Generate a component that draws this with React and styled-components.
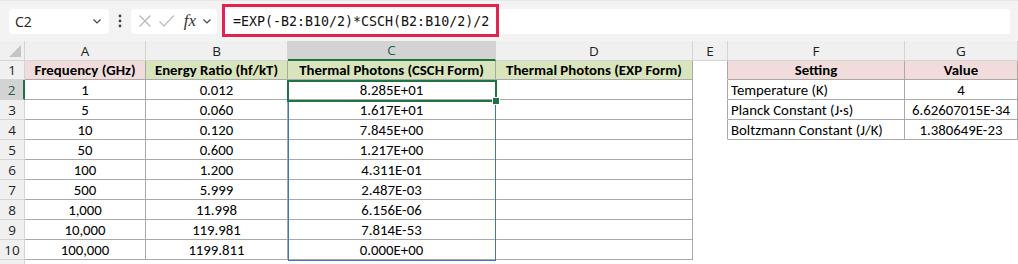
import React from "react";
import styled, { createGlobalStyle } from "styled-components";

const GlobalStyle = createGlobalStyle`
  html, body { margin: 0; padding: 0; background: #ffffff; }
  body { font-family: Calibri, Carlito, Lato, "Liberation Sans", sans-serif; color: #000; }
  * { box-sizing: border-box; }
`;

const COLS = "25px 121px 142px 208px 197px 35px 177px 113px";
const GRID = "#a9a9a9";
const HEADLINE = "#d4d4d4";
const GREEN = "#217346";

const Page = styled.div`
  width: 1018px;
  height: 264px;
  overflow: hidden;
  background: #fff;
`;

const Toolbar = styled.div`
  height: 41px;
  background: #f3f3f3;
  display: flex;
  align-items: center;
  padding: 0 8px 0 9px;
  border-top: 1px solid #e6e6e6;
  font-family: "Open Sans", "Noto Sans", sans-serif;
`;

const NameBox = styled.div`
  width: 100px;
  height: 25px;
  background: #fff;
  border-radius: 4px;
  display: flex;
  align-items: center;
  justify-content: space-between;
  padding: 0 6px 0 6px;
  font-size: 14px;
  color: #222;
`;

const Dots = styled.div`
  width: 22px;
  display: flex;
  justify-content: center;
`;

const FxBox = styled.div`
  width: 86px;
  height: 25px;
  background: #fff;
  border-radius: 4px;
  display: flex;
  align-items: center;
  padding: 0 4px 0 6px;
  gap: 5px;
`;

const Fx = styled.span`
  font-family: "Liberation Serif", "DejaVu Serif", serif;
  font-style: italic;
  font-size: 17px;
  color: #333;
  margin-left: 3px;
`;

const FormulaBar = styled.div`
  position: relative;
  flex: 1;
  margin-left: 6px;
  height: 25px;
  background: #fff;
  border-radius: 3px;
  display: flex;
  align-items: center;
  padding-left: 10px;
  font-family: "DejaVu Sans Mono", "Liberation Mono", monospace;
  font-size: 13.3px;
  color: #111;
`;

const Highlight = styled.div`
  position: absolute;
  left: -1px;
  top: -5px;
  width: 277px;
  height: 33px;
  border: 3px solid #e2224f;
  pointer-events: none;
`;

const Sheet = styled.div`
  position: relative;
`;

const Row = styled.div`
  display: grid;
  grid-template-columns: ${COLS};
  height: ${(p) => p.$h || 20}px;
`;

const ColHead = styled.div`
  background: ${(p) => (p.$sel ? "#d3d3d3" : "#f0f0f0")};
  border-right: 1px solid ${HEADLINE};
  border-bottom: ${(p) => (p.$sel ? `2px solid ${GREEN}` : `1px solid ${HEADLINE}`)};
  display: flex;
  align-items: center;
  justify-content: center;
  font-family: "Open Sans", "Noto Sans", sans-serif;
  font-size: 13.5px;
  color: ${(p) => (p.$sel ? "#1c6040" : "#222")};
  position: relative;
`;

const Corner = styled.div`
  background: #f0f0f0;
  border-right: 1px solid ${HEADLINE};
  border-bottom: 1px solid ${HEADLINE};
  position: relative;
  &::after {
    content: "";
    position: absolute;
    right: 3px;
    bottom: 3px;
    width: 0;
    height: 0;
    border-left: 12px solid transparent;
    border-bottom: 12px solid #c4c4c4;
  }
`;

const RowHead = styled.div`
  background: ${(p) => (p.$sel ? "#d3d3d3" : "#f0f0f0")};
  border-right: ${(p) => (p.$sel ? `2px solid ${GREEN}` : `1px solid ${HEADLINE}`)};
  border-bottom: 1px solid ${HEADLINE};
  display: flex;
  align-items: center;
  justify-content: center;
  font-family: "Open Sans", "Noto Sans", sans-serif;
  font-size: 13.5px;
  color: ${(p) => (p.$sel ? "#1c6040" : "#222")};
`;

const Cell = styled.div`
  background: ${(p) => p.$bg || "#fff"};
  border-right: ${(p) => (p.$br ? `1px solid ${GRID}` : "1px solid transparent")};
  border-bottom: ${(p) => (p.$bb ? `1px solid ${GRID}` : "1px solid transparent")};
  display: flex;
  align-items: center;
  justify-content: ${(p) => (p.$left ? "flex-start" : "center")};
  padding: ${(p) => (p.$left ? "0 0 0 3px" : "0")};
  font-size: 14.8px;
  font-weight: ${(p) => (p.$bold ? 700 : 400)};
  color: #000;
  white-space: nowrap;
  overflow: hidden;
`;

const Active = styled.div`
  position: absolute;
  left: 287px;
  top: 39px;
  width: 210px;
  height: 22px;
  border: 2px solid ${GREEN};
  pointer-events: none;
  &::after {
    content: "";
    position: absolute;
    right: -5px;
    bottom: -5px;
    width: 6px;
    height: 6px;
    background: ${GREEN};
    border: 1px solid #fff;
  }
`;

const Range = styled.div`
  position: absolute;
  left: 288px;
  top: 60px;
  width: 208px;
  height: 160px;
  border: 1px solid #4472c4;
  border-top: none;
  pointer-events: none;
`;

const PINK = "#f2dcdb";
const OLIVE = "#d8e4bc";

const data = [
  ["1", "0.012", "8.285E+01"],
  ["5", "0.060", "1.617E+01"],
  ["10", "0.120", "7.845E+00"],
  ["50", "0.600", "1.217E+00"],
  ["100", "1.200", "4.311E-01"],
  ["500", "5.999", "2.487E-03"],
  ["1,000", "11.998", "6.156E-06"],
  ["10,000", "119.981", "7.814E-53"],
  ["100,000", "1199.811", "0.000E+00"],
];

const settings = [
  ["Temperature (K)", "4"],
  ["Planck Constant (J·s)", "6.62607015E-34"],
  ["Boltzmann Constant (J/K)", "1.380649E-23"],
];

const Chevron = () => (
  <svg width="12" height="12" viewBox="0 0 12 12">
    <path d="M2.5 4.5 L6 8 L9.5 4.5" fill="none" stroke="#444" strokeWidth="1.2" />
  </svg>
);

const XIcon = () => (
  <svg width="16" height="16" viewBox="0 0 16 16">
    <path d="M2.5 2.5 L13.5 13.5 M13.5 2.5 L2.5 13.5" stroke="#b8b8b8" strokeWidth="1.2" fill="none" />
  </svg>
);

const CheckIcon = () => (
  <svg width="18" height="16" viewBox="0 0 18 16">
    <path d="M1.5 8.5 L6 13 L16 2.5" stroke="#b8b8b8" strokeWidth="1.2" fill="none" />
  </svg>
);

const VDots = () => (
  <svg width="4" height="14" viewBox="0 0 4 14">
    <circle cx="2" cy="2" r="1.4" fill="#444" />
    <circle cx="2" cy="7" r="1.4" fill="#444" />
    <circle cx="2" cy="12" r="1.4" fill="#444" />
  </svg>
);

export default function App() {
  return (
    <Page>
      <GlobalStyle />
      <Toolbar>
        <NameBox>
          <span>C2</span>
          <Chevron />
        </NameBox>
        <Dots>
          <VDots />
        </Dots>
        <FxBox>
          <XIcon />
          <CheckIcon />
          <Fx>fx</Fx>
          <Chevron />
        </FxBox>
        <FormulaBar>
          =EXP(-B2:B10/2)*CSCH(B2:B10/2)/2
          <Highlight />
        </FormulaBar>
      </Toolbar>
      <Sheet>
        <Row $h={19}>
          <Corner />
          {["A", "B", "C", "D", "E", "F", "G"].map((c) => (
            <ColHead key={c} $sel={c === "C"}>
              {c}
            </ColHead>
          ))}
        </Row>
        <Row>
          <RowHead>1</RowHead>
          <Cell $bg={PINK} $bold $br $bb>Frequency (GHz)</Cell>
          <Cell $bg={OLIVE} $bold $br $bb>Energy Ratio (hf/kT)</Cell>
          <Cell $bg={OLIVE} $bold $br $bb>Thermal Photons (CSCH Form)</Cell>
          <Cell $bg={OLIVE} $bold $br $bb>Thermal Photons (EXP Form)</Cell>
          <Cell $br />
          <Cell $bg={PINK} $bold $br $bb>Setting</Cell>
          <Cell $bg={PINK} $bold $br $bb>Value</Cell>
        </Row>
        {data.map((r, i) => {
          const s = settings[i];
          return (
            <Row key={i}>
              <RowHead $sel={i === 0}>{i + 2}</RowHead>
              <Cell $br $bb>{r[0]}</Cell>
              <Cell $br $bb>{r[1]}</Cell>
              <Cell $br $bb>{r[2]}</Cell>
              <Cell $br $bb />
              <Cell $br={!!s} />
              {s ? (
                <>
                  <Cell $left $br $bb>{s[0]}</Cell>
                  <Cell $br $bb>{s[1]}</Cell>
                </>
              ) : (
                <>
                  <Cell />
                  <Cell />
                </>
              )}
            </Row>
          );
        })}
        <Row>
          <RowHead />
        </Row>
        <Range />
        <Active />
      </Sheet>
    </Page>
  );
}
